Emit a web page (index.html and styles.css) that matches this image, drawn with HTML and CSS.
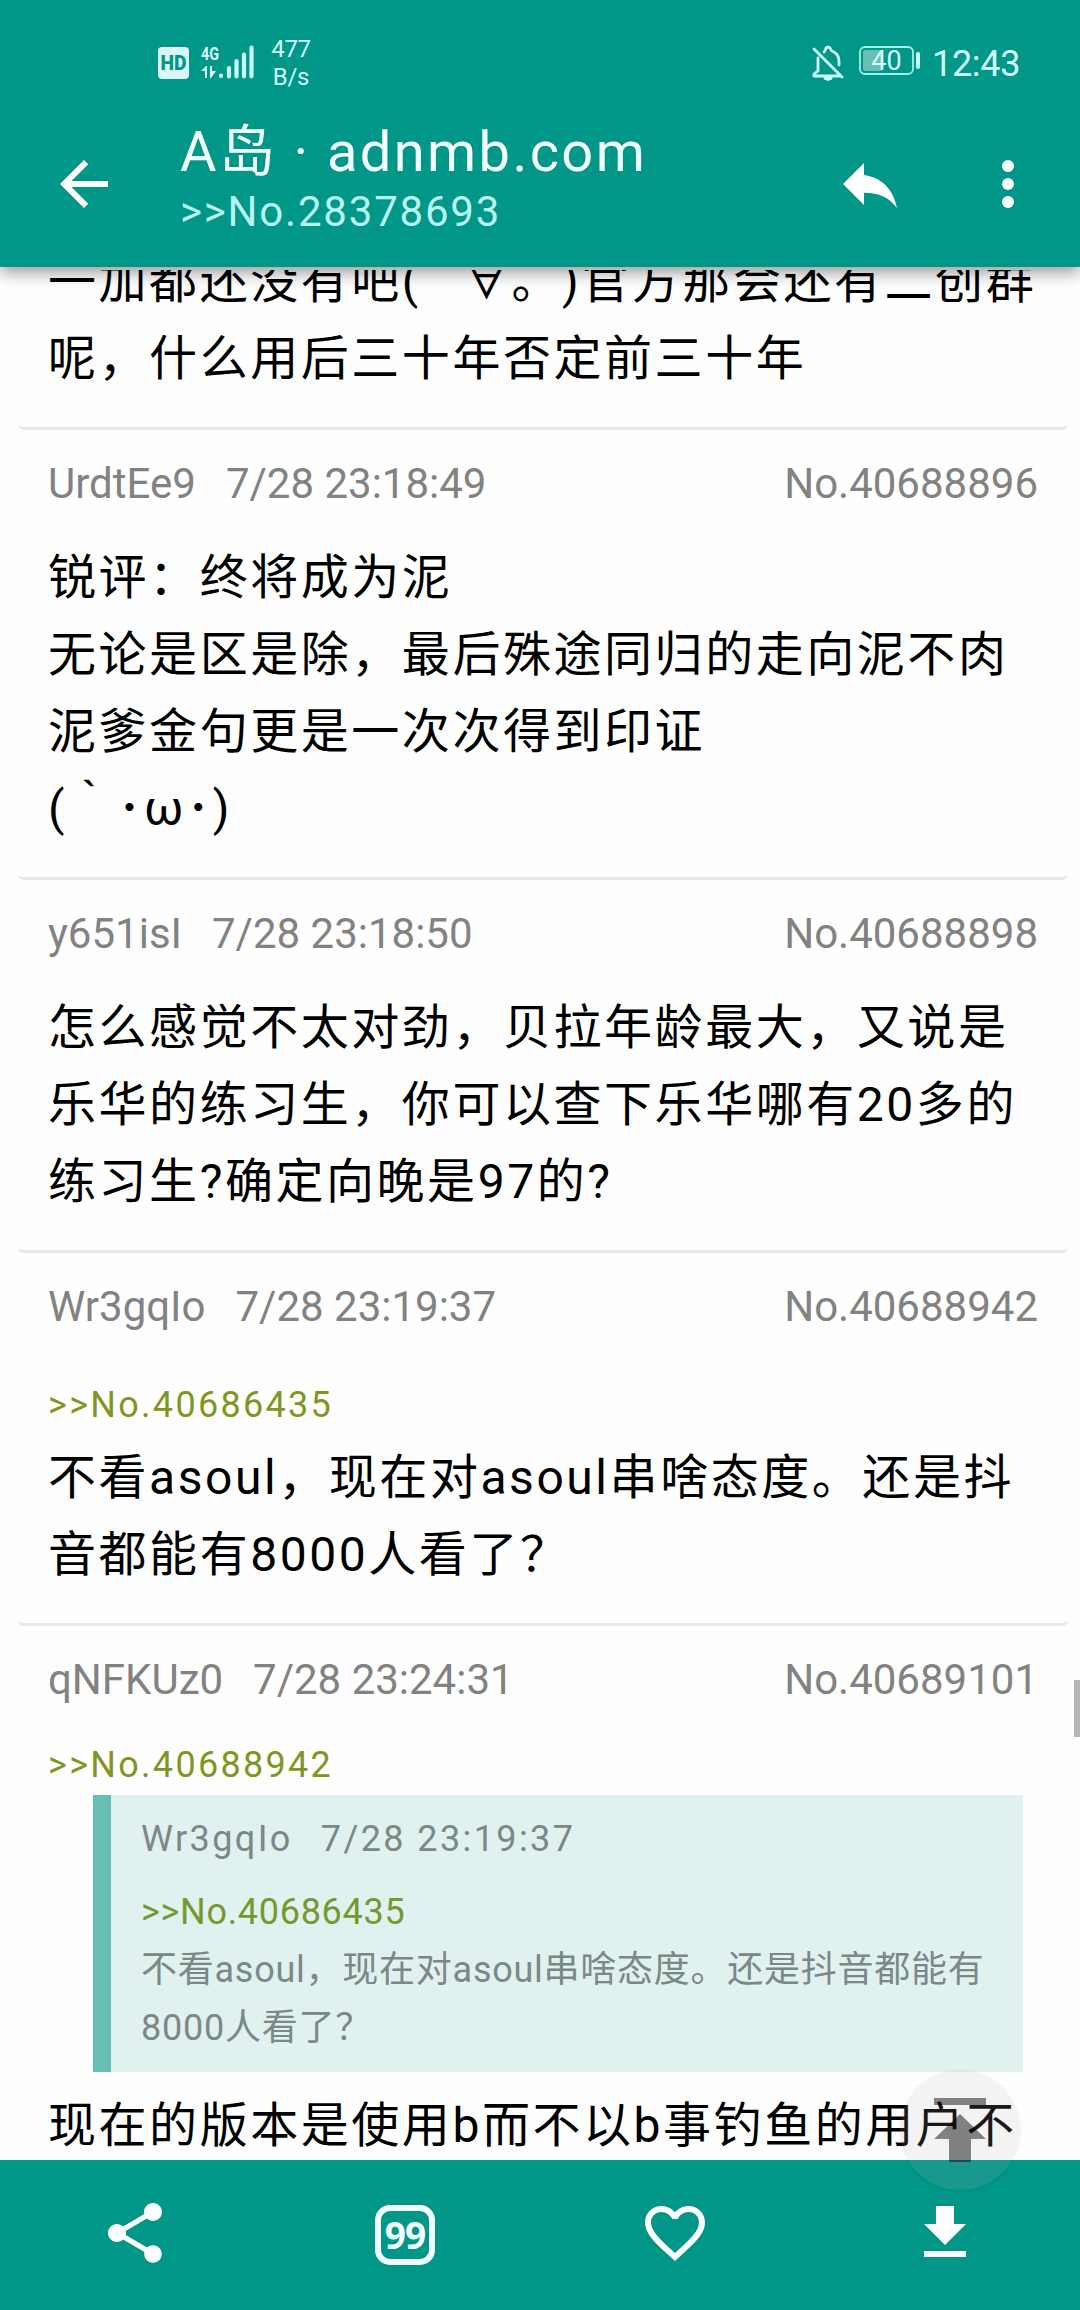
FILE: index.html
```html
<!DOCTYPE html>
<html lang="zh-CN">
<head>
<meta charset="utf-8">
<title>A岛 · adnmb.com</title>
<link rel="stylesheet" href="styles.css">
</head>
<body>
<div class="app">
  <header class="top">
    <div class="status">
      <svg class="signal" width="98" height="36" viewBox="0 0 98 36">
        <rect x="1" y="3" width="31" height="32" rx="4" fill="#dcf6f6"/>
        <text class="hd" x="16.5" y="26" text-anchor="middle" textLength="26" lengthAdjust="spacingAndGlyphs">HD</text>
        <text class="net" x="44" y="16" textLength="18" lengthAdjust="spacingAndGlyphs">4G</text>
        <path d="M48 34v-7h-4l5-5h1v12zM53 22h2v5h4l-5 7h-1z" fill="#dcfafa"/>
        <path d="M64 31.500v.5M72 24v8.500M79.500 17v15.500M87 10.500v22M94.500 3.500v29" stroke="#c8fafa" stroke-width="4.200" stroke-linecap="round"/>
      </svg>
      <div class="speed">477<br>B/s</div>
      <svg class="bell" width="32" height="36" viewBox="0 0 32 36" fill="none" stroke="#d2ffff" stroke-width="2.800" stroke-linecap="round" stroke-linejoin="round">
        <path d="M2 5l28 28M6 14v13l-4 3v2h25M12 8c2-1 1-5 4-5s2 3 4 4c5 2 7 5 7 10v4"/>
        <path d="M13 34.500h6l-3 1z"/>
      </svg>
      <svg class="battery" width="62" height="30" viewBox="0 0 62 30">
        <rect x="1" y="1" width="53" height="27" rx="5" fill="none" stroke="#9ff0ea" stroke-width="1.800"/>
        <rect x="4" y="4" width="19" height="21" rx="2" fill="#68bfb5"/>
        <rect x="57" y="6" width="4" height="17" rx="2" fill="#c8fafa"/>
        <text class="level" x="27.500" y="24" text-anchor="middle">40</text>
      </svg>
      <div class="clock">12:43</div>
    </div>
    <div class="toolbar">
      <svg class="icon" viewBox="0 0 24 24"><path d="M20 11H7.830l5.590-5.590L12 4l-8 8 8 8 1.410-1.410L7.830 13H20v-2z"/></svg>
      <div class="titles">
        <h1 class="title">A岛 · adnmb.com</h1>
        <div class="subtitle">&gt;&gt;No.28378693</div>
      </div>
      <svg class="icon" viewBox="0 0 24 24"><path d="M10 9V5l-7 7 7 7v-4.100c5 0 8.500 1.600 11 5.100-1-5-4-10-11-11z"/></svg>
      <svg class="icon more" viewBox="0 0 24 24"><circle cx="12" cy="6" r="2"/><circle cx="12" cy="12" r="2"/><circle cx="12" cy="18" r="2"/></svg>
    </div>
  </header>

  <main class="list">
    <article class="post first">
      <div class="body">一加都还没有吧(゜<span class="mouth">∀</span>。)官方那会还有二创群<br>呢，什么用后三十年否定前三十年</div>
    </article>
    <article class="post">
      <div class="meta"><span>UrdtEe9</span><span class="date">7/28 23:18:49</span><span class="no">No.40688896</span></div>
      <div class="body">锐评：终将成为泥<br>无论是区是除，最后殊途同归的走向泥不肉<br>泥爹金句更是一次次得到印证<br>(｀･ω･)</div>
    </article>
    <article class="post">
      <div class="meta"><span>y651isI</span><span class="date">7/28 23:18:50</span><span class="no">No.40688898</span></div>
      <div class="body">怎么感觉不太对劲，贝拉年龄最大，又说是<br>乐华的练习生，你可以查下乐华哪有20多的<br>练习生?确定向晚是97的?</div>
    </article>
    <article class="post">
      <div class="meta"><span>Wr3gqIo</span><span class="date">7/28 23:19:37</span><span class="no">No.40688942</span></div>
      <div class="link tall">&gt;&gt;No.40686435</div>
      <div class="body">不看asoul，现在对asoul串啥态度。还是抖<br>音都能有8000人看了？</div>
    </article>
    <article class="post">
      <div class="meta"><span>qNFKUz0</span><span class="date">7/28 23:24:31</span><span class="no">No.40689101</span></div>
      <div class="link">&gt;&gt;No.40688942</div>
      <blockquote class="quote">
        <div class="qmeta"><span>Wr3gqIo</span><span class="qdate">7/28 23:19:37</span></div>
        <div class="qlink">&gt;&gt;No.40686435</div>
        <div class="qbody">不看asoul，现在对asoul串啥态度。还是抖音都能有<br>8000人看了？</div>
      </blockquote>
      <div class="body">现在的版本是使用b而不以b事钓鱼的用户不</div>
    </article>
  </main>

  <nav class="bottom">
    <svg class="icon" viewBox="0 0 24 24"><path d="M18 16.080c-.76 0-1.440.3-1.960.77L8.910 12.700c.05-.23.09-.46.09-.7s-.04-.47-.09-.7l7.050-4.110c.54.5 1.250.81 2.040.81 1.660 0 3-1.340 3-3s-1.340-3-3-3-3 1.340-3 3c0 .24.04.47.09.7L8.040 9.810C7.500 9.310 6.790 9 6 9c-1.660 0-3 1.340-3 3s1.340 3 3 3c.79 0 1.500-.31 2.040-.81l7.120 4.160c-.05.21-.08.43-.08.65 0 1.610 1.310 2.920 2.920 2.920s2.920-1.310 2.920-2.920-1.310-2.920-2.920-2.920z"/></svg>
    <div class="count">99</div>
    <svg class="icon" viewBox="0 0 24 24"><path d="M16.500 3c-1.740 0-3.410.81-4.500 2.090C10.910 3.810 9.240 3 7.500 3 4.420 3 2 5.420 2 8.500c0 3.780 3.400 6.860 8.550 11.540L12 21.350l1.450-1.320C18.600 15.360 22 12.280 22 8.500 22 5.420 19.580 3 16.500 3zm-4.400 15.550l-.1.100-.1-.100C7.140 14.240 4 11.390 4 8.500 4 6.500 5.500 5 7.500 5c1.540 0 3.040.99 3.570 2.360h1.870C13.460 5.990 14.960 5 16.500 5c2 0 3.500 1.500 3.500 3.500 0 2.890-3.140 5.740-7.900 10.050z"/></svg>
    <svg class="icon" viewBox="0 0 24 24"><path d="M19 9h-4V3H9v6H5l7 7 7-7zM5 18v2h14v-2H5z"/></svg>
  </nav>

  <div class="scrollbar"></div>
  <div class="fab"><svg width="52" height="64" viewBox="0 0 52 64"><path d="M0 0h52v7H0zM26 16l26 25H37v23H15V41H0z"/></svg></div>
</div>
</body>
</html>
```
FILE: styles.css
```css
* { box-sizing: border-box; }
body { margin: 0; background: #fff; font-family: Roboto, "Noto Sans CJK SC", sans-serif; text-spacing-trim: space-all; }
.app { position: relative; width: 1080px; height: 2310px; overflow: hidden; display: flex; flex-direction: column; background: #fefefe; white-space: nowrap; }

.top { height: 267px; flex: none; background: #009688; z-index: 2; box-shadow: 0 5px 16px rgba(0,0,0,.42); }
.status { height: 125px; display: flex; align-items: flex-start; color: #d2ffff; }
.status svg { overflow: visible; }
.signal { margin: 44px 0 0 157px; }
.hd { font: 900 21px Roboto, sans-serif; fill: #009688; }
.net { font: 700 19px Roboto, sans-serif; fill: #dcfafa; }
.speed { margin: 35px 0 0 11px; width: 50px; font-size: 24px; line-height: 28px; text-align: center; letter-spacing: -.3px; }
.bell { margin: 44px 0 0 496px; }
.battery { margin: 46px 0 0 15px; }
.level { font: 27px Roboto, sans-serif; fill: #d8ffff; }
.clock { margin: 44px 0 0 11px; font-size: 36px; line-height: 40px; letter-spacing: -.3px; }
.toolbar { display: flex; align-items: flex-start; padding-left: 48px; }
.toolbar > .icon { margin-top: 23px; }
.icon { width: 72px; height: 72px; fill: #fff; flex: none; display: block; }
.titles { width: 714px; padding-left: 60px; }
.title { margin: -8px 0 0; font-size: 56px; font-weight: 400; line-height: 71px; letter-spacing: 2.400px; color: #f4ffff; }
.subtitle { font-size: 42px; line-height: 48px; letter-spacing: 1.800px; color: #b9f3ee; }
.more { margin-left: 66px; }

.list { flex: 1; margin-top: 3px; min-height: 0; overflow: hidden; }
.post { margin: 0 12px 0 18px; padding: 29px 30px 27px; border-bottom: 3px solid #e8e8e8; border-radius: 0 0 6px 6px; }
.post.first { padding-top: 0; margin-top: -27px; }
.mouth { margin: 0 -1.500px 0 -9px; }
.meta { height: 50px; margin-bottom: 30px; display: flex; font-size: 42px; line-height: 50px; color: #828282; }
.date { margin-left: 30px; }
.no { margin-left: auto; }
.body { font-size: 48px; line-height: 77px; letter-spacing: 2.550px; color: #000; padding-bottom: 3px; }
.link { height: 60px; font-size: 36px; line-height: 60px; letter-spacing: 2.300px; color: #7f9722; }
.link.tall { height: 77px; line-height: 86px; }
.quote { margin: 0 15px 15px 45px; height: 277px; border-left: 18px solid #68bfb5; background: #e0f1f0; padding: 23px 0 0 30px; color: #7b8886; font-size: 36px; }
.qmeta { display: flex; line-height: 42px; letter-spacing: 2.400px; }
.qdate { margin-left: 28px; }
.qlink { margin-top: 31px; line-height: 42px; letter-spacing: .7px; color: #74992f; }
.qbody { margin-top: 8px; line-height: 58px; letter-spacing: .75px; }

.bottom { height: 150px; flex: none; background: #009688; display: grid; grid-template-columns: repeat(4, 1fr); justify-items: center; padding-top: 37px; }
.count { width: 60px; height: 60px; margin-top: 8px; border: 6px solid #f4ffff; border-radius: 15px; color: #f4ffff; font: 700 37px/48px "Noto Sans", sans-serif; text-align: center; letter-spacing: -1px; }
.scrollbar { position: absolute; z-index: 2; right: 0; top: 1680px; width: 6px; height: 57px; background: #b6b6b6; }
.fab { position: absolute; z-index: 3; left: 900px; top: 2070px; width: 120px; height: 120px; border-radius: 50%; background: rgba(174,174,174,.14); box-shadow: 0 1px 3px rgba(0,0,0,.08); padding: 28px 0 0 34px; }
.fab svg { display: block; fill: rgba(0,0,0,.47); }
```
